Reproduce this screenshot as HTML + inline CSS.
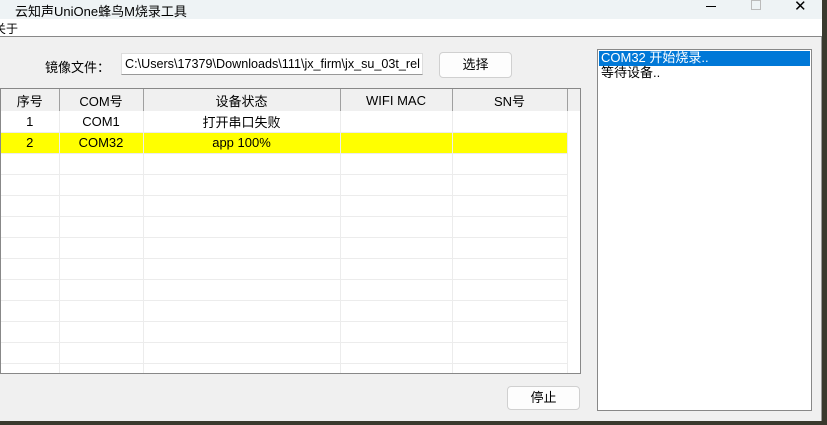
<!DOCTYPE html>
<html><head><meta charset="utf-8"><style>
*{margin:0;padding:0;box-sizing:border-box}
body{width:827px;height:425px;overflow:hidden;background:#3a3a2e;font-family:"Liberation Sans","Noto Sans CJK SC",sans-serif;font-size:13px;color:#000;position:relative}
.win{position:absolute;left:0;top:0;width:822px;height:421px;background:#f0f0f0;border-right:1px solid #999}
.title{position:absolute;left:0;top:0;width:822px;height:19px;background:#eef3f5}
.title span{position:absolute;left:15px;top:1px;font-size:13px}
.menu{position:absolute;left:0;top:19px;width:822px;height:18px;background:#fff;border-bottom:1px solid #888}
.menu span{position:absolute;left:-6px;top:1px;font-size:12px}
.abs{position:absolute}
.btn{position:absolute;background:#fdfdfd;border:1px solid #d0d0d0;border-radius:4px;text-align:center;font-size:13px}
table{border-collapse:collapse;position:absolute;left:0;top:0;table-layout:fixed}
td{height:21px;border-right:1px solid #ececec;border-bottom:1px solid #ececec;text-align:center;font-size:13px;padding:0}
th{height:22px;background:#f0f0f0;font-weight:normal;border-right:1px solid #a0a0a0;font-size:13px;text-align:center;padding:0}
</style></head><body>
<div class="win">
<div class="title"><span>云知声UniOne蜂鸟M烧录工具</span>
<div class="abs" style="left:706px;top:6px;width:10px;height:1px;background:#000"></div>
<div class="abs" style="left:751px;top:0px;width:10px;height:10px;border:1px solid #bbb"></div>
<div class="abs" style="left:794px;top:-3px;font-size:15px">✕</div>
</div>
<div class="menu"><span>关于</span></div>
<div class="abs" style="left:45px;top:57px">镜像文件：</div>
<div class="abs" style="left:121px;top:53px;width:302px;height:22px;background:#fff;border:1px solid #ddd;border-bottom-color:#999;padding:3px 3px;white-space:nowrap;overflow:hidden;font-size:12.6px">C:\Users\17379\Downloads\111\jx_firm\jx_su_03t_rel</div>
<div class="btn" style="left:439px;top:52px;width:73px;height:26px;line-height:24px">选择</div>
<div class="abs" style="left:0;top:88px;width:581px;height:286px;background:#fff;border:1px solid #888;overflow:hidden">
<div class="abs" style="left:565px;top:0;width:15px;height:22px;background:#f0f0f0"></div>
<table>
<colgroup><col style="width:58px"><col style="width:84px"><col style="width:197px"><col style="width:112px"><col style="width:115px"></colgroup>
<tr><th>序号</th><th>COM号</th><th>设备状态</th><th>WIFI MAC</th><th>SN号</th></tr>
<tr><td>1</td><td>COM1</td><td>打开串口失败</td><td></td><td></td></tr>
<tr style="background:#ffff00"><td>2</td><td>COM32</td><td>app 100%</td><td></td><td></td></tr>
<tr><td></td><td></td><td></td><td></td><td></td></tr>
<tr><td></td><td></td><td></td><td></td><td></td></tr>
<tr><td></td><td></td><td></td><td></td><td></td></tr>
<tr><td></td><td></td><td></td><td></td><td></td></tr>
<tr><td></td><td></td><td></td><td></td><td></td></tr>
<tr><td></td><td></td><td></td><td></td><td></td></tr>
<tr><td></td><td></td><td></td><td></td><td></td></tr>
<tr><td></td><td></td><td></td><td></td><td></td></tr>
<tr><td></td><td></td><td></td><td></td><td></td></tr>
<tr><td></td><td></td><td></td><td></td><td></td></tr>
<tr><td></td><td></td><td></td><td></td><td></td></tr>
</table>
</div>
<div class="btn" style="left:507px;top:386px;width:73px;height:24px;line-height:22px">停止</div>
<div class="abs" style="left:597px;top:49px;width:215px;height:362px;background:#fff;border:1px solid #888">
<div style="background:#0078d7;color:#fff;height:15px;line-height:14px;padding-left:2px;margin:1px 1px 0">COM32 开始烧录..</div>
<div style="height:15px;line-height:14px;padding-left:3px">等待设备..</div>
</div>
</div>
</body></html>
